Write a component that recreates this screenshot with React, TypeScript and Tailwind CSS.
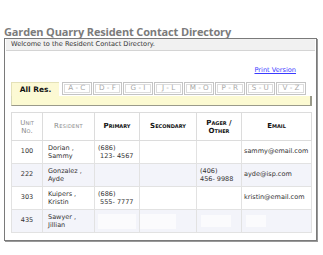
import React from "react";

const tabs = ["A - C", "D - F", "G - I", "J - L", "M - O", "P - R", "S - U", "V - Z"];

const rows = [
  { unit: "100", name: ["Dorian ,", "Sammy"], primary: ["(686)", "\u00a0123- 4567"], pager: [], email: "sammy@email.com" },
  { unit: "222", name: ["Gonzalez ,", "Ayde"], primary: [], pager: ["(406)", "456- 9988"], email: "ayde@isp.com" },
  { unit: "303", name: ["Kuipers ,", "Kristin"], primary: ["(686)", "\u00a0555- 7777"], pager: [], email: "kristin@email.com" },
  { unit: "435", name: ["Sawyer ,", "Jillian"], primary: [], pager: [], email: "" },
];

const Lines: React.FC<{ lines: string[] }> = ({ lines }) => (
  <div className="leading-[8px] whitespace-pre">
    {lines.map((l, i) => (
      <div key={i}>{l}</div>
    ))}
  </div>
);

export default function App() {
  return (
    <div className="w-[323px] h-[255px] bg-white pt-[25px] pl-[4px] font-['DejaVu_Sans',Verdana,sans-serif] text-[#333]">
      <h1 className="h-[13px] leading-[13px] text-[11px] font-bold text-[#7b7b7b] font-['Open_Sans',sans-serif] tracking-[-0.15px]">
        Garden Quarry Resident Contact Directory
      </h1>

      {/* main box */}
      <div className="w-[313px] h-[203px] border border-[#7a7a7a] shadow-[1px_1px_0_#999] flex flex-col">
        <div className="h-[12px] mx-[1px] bg-[#f1f1f1] border-b border-[#d4d4d4] pl-[5px] text-[6.6px] leading-[11px] text-[#333]">
          Welcome to the Resident Contact Directory.
        </div>

        <div className="pl-[6px] pr-[4px]">
          <div className="flex justify-end pr-[16px] pt-[15px] h-[31px]">
            <a className="text-[6.6px] leading-[8px] text-[#3a3aff] underline">Print Version</a>
          </div>

          {/* tabs */}
          <div className="flex items-end h-[14px]">
            <div className="w-[48px] h-[14px] bg-[#fcf9d4] border-t border-l border-[#e4e1b8] flex items-center justify-center text-[7.5px] font-bold text-[#111]">
              All Res.
            </div>
            <div className="flex gap-[1px] ml-[3px] mb-[1px]">
              {tabs.map((t) => (
                <div key={t} className="h-[13px] w-[29.6px] border border-[#c4c4c4] p-[1px] bg-white">
                  <div className="h-full border border-[#dcdcdc] flex items-center justify-center text-[7.2px] text-[#a8a8a8] whitespace-pre">
                    {t}
                  </div>
                </div>
              ))}
            </div>
          </div>
          <div className="h-[10px] w-[301px] bg-[#fcfad2] border-l border-[#d7d7b8] border-b border-r-2 border-b-[#9a9a8a] border-r-[#9a9a8a]" />

          {/* table */}
          <table className="mt-[6px] w-[300px] table-fixed border-collapse text-[6.5px]">
            <colgroup>
              <col className="w-[31px]" />
              <col className="w-[52px]" />
              <col className="w-[45px]" />
              <col className="w-[57px]" />
              <col className="w-[45px]" />
              <col className="w-[70px]" />
            </colgroup>
            <thead>
              <tr className="h-[28px] [font-variant:small-caps] text-[7px]">
                <th className="border border-[#dcdcdc] font-normal text-[#8a8a8a] leading-[8px]">
                  Unit<br />No.
                </th>
                <th className="border border-[#dcdcdc] font-normal text-[#8a8a8a] tracking-[0.3px]">Resident</th>
                <th className="border border-[#dcdcdc] font-bold text-[#111]">Primary</th>
                <th className="border border-[#dcdcdc] font-bold text-[#111]">Secondary</th>
                <th className="border border-[#dcdcdc] font-bold text-[#111] leading-[8px]">
                  Pager /<br />Other
                </th>
                <th className="border border-[#dcdcdc] font-bold text-[#111]">Email</th>
              </tr>
            </thead>
            <tbody>
              {rows.map((r, i) => {
                const alt = i % 2 === 1;
                const bg = alt ? "bg-[#f3f4fa]" : "bg-white";
                return (
                  <tr key={r.unit} className={`h-[23px] ${bg}`}>
                    <td className="border border-[#e2e2e2] text-center">{r.unit}</td>
                    <td className="border border-[#e2e2e2] pl-[5px]">
                      <Lines lines={r.name} />
                    </td>
                    <td className="border border-[#e2e2e2] pl-[3px]">
                      {i === 3 ? <div className="h-[15px] w-[38px] bg-[#fbfbfd]" /> : <Lines lines={r.primary} />}
                    </td>
                    <td className="border border-[#e2e2e2]">
                      {i === 3 ? <div className="h-[15px] w-[36px] bg-[#fbfbfd]" /> : null}
                    </td>
                    <td className="border border-[#e2e2e2] pl-[3px]">
                      {i === 3 ? <div className="h-[12px] w-[30px] ml-[1px] bg-[#fbfbfd]" /> : <Lines lines={r.pager} />}
                    </td>
                    <td className="border border-[#e2e2e2] pl-[2px]">
                      {i === 3 ? <div className="h-[12px] w-[20px] ml-[2px] bg-[#fbfbfd]" /> : r.email}
                    </td>
                  </tr>
                );
              })}
            </tbody>
          </table>
        </div>
      </div>
    </div>
  );
}
